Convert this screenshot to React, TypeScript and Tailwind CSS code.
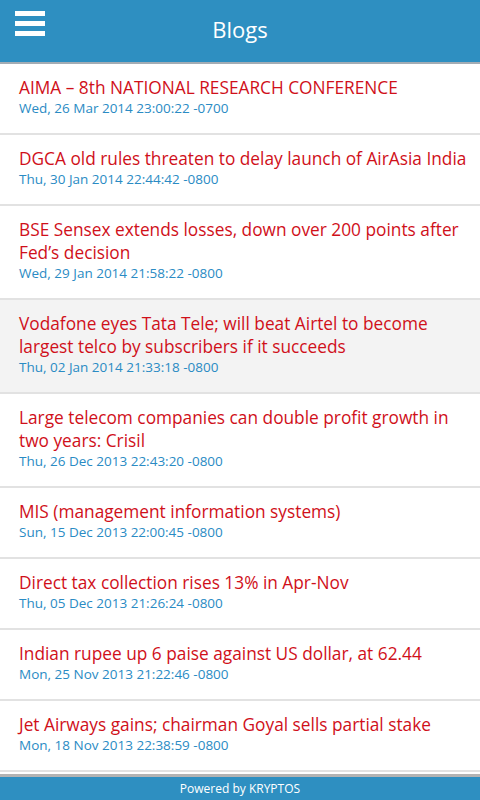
import React from 'react';

interface Post {
  title: string;
  date: string;
}

const posts: Post[] = [
  { title: 'AIMA – 8th NATIONAL RESEARCH CONFERENCE', date: 'Wed, 26 Mar 2014 23:00:22 -0700' },
  { title: 'DGCA old rules threaten to delay launch of AirAsia India', date: 'Thu, 30 Jan 2014 22:44:42 -0800' },
  { title: 'BSE Sensex extends losses, down over 200 points after Fed’s decision', date: 'Wed, 29 Jan 2014 21:58:22 -0800' },
  { title: 'Vodafone eyes Tata Tele; will beat Airtel to become largest telco by subscribers if it succeeds', date: 'Thu, 02 Jan 2014 21:33:18 -0800' },
  { title: 'Large telecom companies can double profit growth in two years: Crisil', date: 'Thu, 26 Dec 2013 22:43:20 -0800' },
  { title: 'MIS (management information systems)', date: 'Sun, 15 Dec 2013 22:00:45 -0800' },
  { title: 'Direct tax collection rises 13% in Apr-Nov', date: 'Thu, 05 Dec 2013 21:26:24 -0800' },
  { title: 'Indian rupee up 6 paise against US dollar, at 62.44', date: 'Mon, 25 Nov 2013 21:22:46 -0800' },
  { title: 'Jet Airways gains; chairman Goyal sells partial stake', date: 'Mon, 18 Nov 2013 22:38:59 -0800' },
];

const PostRow: React.FC<{ post: Post; active?: boolean }> = ({ post, active }) => (
  <div
    className={`border-b-2 border-[#e2e2e2] pl-[19px] pr-3 pt-[12px] pb-[16px] ${
      active ? 'bg-[#f3f3f3]' : 'bg-white'
    }`}
  >
    <p className="text-[17.3px] leading-[23px] text-[#d0101a]">{post.title}</p>
    <p className="text-[13.5px] leading-[18px] text-[#2a8bc4]">{post.date}</p>
  </div>
);

export default function App() {
  return (
    <div
      className="h-[800px] w-[480px] flex flex-col bg-white overflow-hidden"
      style={{ fontFamily: '"Open Sans", "Noto Sans", sans-serif' }}
    >
      {/* Header */}
      <div className="h-[64px] shrink-0 bg-[#2e8fc1] border-b-2 border-[#a3acb4] relative flex items-center justify-center">
        <div className="absolute left-[15px] top-[11px] flex flex-col gap-[5px]">
          <span className="block w-[30px] h-[5px] bg-white" />
          <span className="block w-[30px] h-[5px] bg-white" />
          <span className="block w-[30px] h-[5px] bg-white" />
        </div>
        <h1 className="text-[22px] text-white -mt-[3px]">Blogs</h1>
      </div>

      {/* List */}
      <div className="flex-1 overflow-hidden">
        {posts.map((post, i) => (
          <PostRow key={i} post={post} active={i === 3} />
        ))}
      </div>

      {/* Footer */}
      <div className="h-[26px] shrink-0 bg-[#2e8fc1] border-t-[3px] border-[#b3b3b3] flex items-center justify-center">
        <span className="text-[12px] text-white">Powered by KRYPTOS</span>
      </div>
    </div>
  );
}
